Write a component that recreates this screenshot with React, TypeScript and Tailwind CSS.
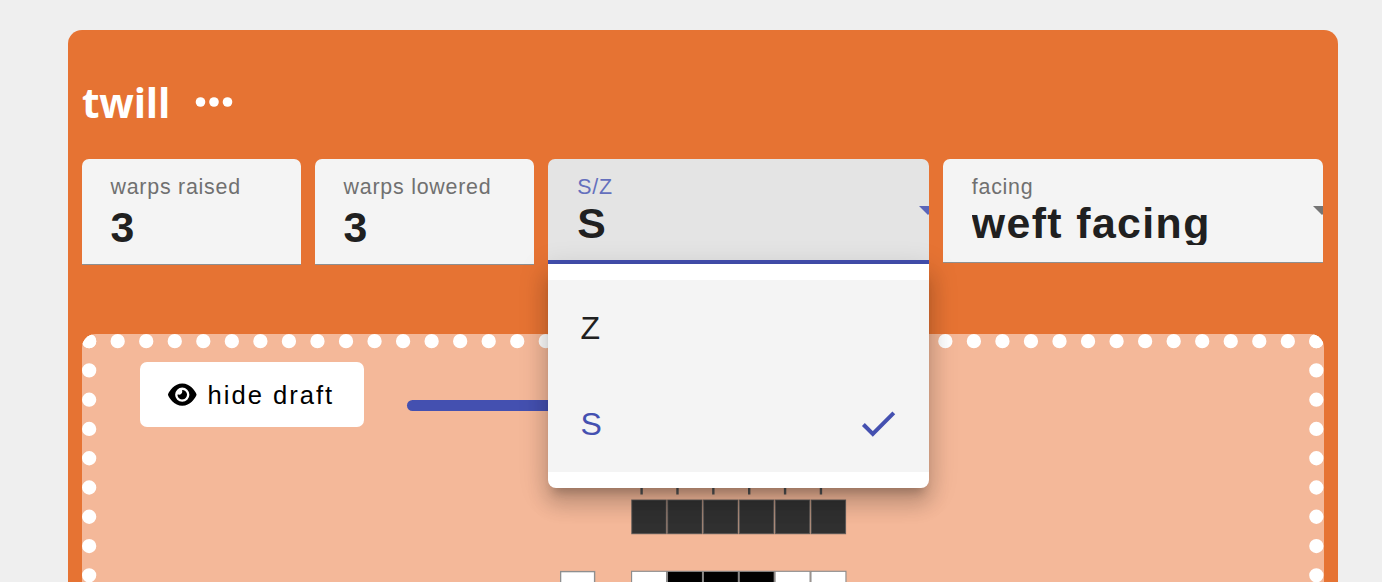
import type { ReactNode } from "react";
import { FaEye } from "react-icons/fa6";

const columns = [0, 1, 2, 3, 4, 5];
const raised = [false, true, true, true, false, false];

function Label({ children, tone = "text-[#707070]" }: { children: ReactNode; tone?: string }) {
  return (
    <div className={`h-6 whitespace-nowrap text-[21.4px] leading-6 tracking-[0.76px] ${tone}`}>{children}</div>
  );
}

function NumberField({ label, value }: { label: string; value: number }) {
  return (
    <div className="h-[106px] w-[219px] rounded-t-[7px] border-b-[1.5px] border-[#8d8f91] bg-[#f4f4f4] pl-[28.5px] pt-[16px]">
      <Label>{label}</Label>
      <div className="mt-[4px] text-[42.8px] font-bold leading-[48px] tracking-[1.4px] text-[#202020]">{value}</div>
    </div>
  );
}

function SelectField({ label, value, open = false }: { label: string; value: string; open?: boolean }) {
  return (
    <div
      className={
        open
          ? "flex h-[105.5px] w-[380.5px] overflow-hidden rounded-t-[7px] border-b-4 border-[#4450b0] bg-[#e4e4e4] pl-[29px] pt-[16px]"
          : "flex h-[104.5px] w-[380.5px] overflow-hidden rounded-t-[7px] border-b-[1.5px] border-[#8f8f8f] bg-[#f4f4f4] pl-[29px] pt-[16px]"
      }
    >
      <div className="w-[341.5px] shrink-0">
        <Label tone={open ? "text-[#6470bd]" : undefined}>{label}</Label>
        <div className="h-[46.5px] overflow-hidden whitespace-nowrap text-[42.8px] font-bold leading-[48px] tracking-[1.4px] text-[#202020]">
          {value}
        </div>
      </div>
      <svg
        className={`mt-[31px] h-[9px] w-[18px] shrink-0 ${open ? "text-[#5b66ba]" : "text-[#757575]"}`}
        viewBox="0 0 18 9"
      >
        <path d="M0 0H18L9 9Z" fill="currentColor" />
      </svg>
    </div>
  );
}

function Menu() {
  return (
    <div className="absolute -left-[0.2px] top-[105.5px] z-10 h-[224px] w-[381px] rounded-b-[8px] bg-white py-4 text-[32px] shadow-[0_10px_10px_-6px_rgba(0,0,0,0.2),0_16px_20px_2px_rgba(0,0,0,0.14),0_6px_28px_4px_rgba(0,0,0,0.12)]">
      <div className="flex h-24 items-center bg-[#f4f4f4] pl-[32.5px] text-[#202020]">Z</div>
      <div className="flex h-24 items-center justify-between bg-[#f4f4f4] pl-[32.5px] pr-[32.4px] text-[#4450b0]">
        <span>S</span>
        <svg className="h-[28px] w-[36px]" viewBox="0 0 36 28" fill="none">
          <path d="M2.4 14.5L11.8 23.9L32.8 2.9" stroke="currentColor" strokeWidth="4" />
        </svg>
      </div>
    </div>
  );
}

function DottedEdge() {
  return (
    <svg
      className="pointer-events-none absolute inset-0 h-[300px] w-[1241.5px]"
      viewBox="0 0 1241.5 300"
      fill="none"
      stroke="white"
      strokeWidth="14.3"
      strokeLinecap="round"
    >
      <path d="M7.15 7.15H1236" strokeDasharray="0 28.54" />
      <path d="M7.15 7.15V300" strokeDasharray="0 29.27" />
      <path d="M1234.35 7.15V300" strokeDasharray="0 29.27" />
    </svg>
  );
}

function Draft() {
  return (
    <svg className="ml-[478px] h-[112px] w-[290px]" viewBox="560 470 290 112">
      {columns.map((i) => (
        <g key={i} stroke="#555555">
          <path d={`M${641.6 + i * 35.87} 470V494.5`} strokeWidth="2.4" />
          <rect x={631.8 + i * 35.87} y="500" width="34.4" height="33.7" fill="#303030" strokeWidth="1.1" strokeOpacity=".8" />
          <rect
            x={631.6 + i * 35.87}
            y="571.3"
            width="35"
            height="34"
            fill={raised[i] ? "#000000" : "#ffffff"}
            stroke="#8a8a8a"
            strokeWidth="1.1"
          />
        </g>
      ))}
      <rect x="560.6" y="571.6" width="34" height="34" fill="white" stroke="#8f8f8f" strokeWidth="1.4" />
    </svg>
  );
}

export default function App() {
  return (
    <div className="h-[582px] w-[1382px] overflow-hidden bg-[#efefef] pl-[68px] pt-[29.5px] font-['Liberation_Sans',Arial,sans-serif]">
      <main className="h-[700px] w-[1270px] rounded-[14px] bg-[#e67333] px-[14px] pt-[43.5px]">
        <header className="flex h-[60px] items-center">
          <h1 className="font-['Open_Sans',sans-serif] text-[40.4px] font-bold leading-[60px] tracking-[-0.2px] text-white">twill</h1>
          <svg className="ml-[24.5px] h-[12px] w-[38px]" viewBox="0 0 38 12" fill="white">
            <circle cx="5.5" cy="5" r="4.8" />
            <circle cx="19" cy="5" r="4.8" />
            <circle cx="32.5" cy="5" r="4.8" />
          </svg>
        </header>

        <div className="mt-[25.5px] flex h-[175.5px] items-start gap-[14.1px]">
          <NumberField label="warps raised" value={3} />
          <NumberField label="warps lowered" value={3} />
          <div className="relative">
            <SelectField label="S/Z" value="S" open />
            <Menu />
          </div>
          <SelectField label="facing" value="weft facing" />
        </div>

        <section className="relative h-[400px] w-[1241.5px] overflow-hidden rounded-[14px] bg-[#f4b899]">
          <DottedEdge />
          <div className="flex h-[136px] items-start pl-[57.5px] pt-[28.2px]">
            <button className="flex h-[65px] w-[224.5px] items-center rounded-[7px] bg-white pl-[28.5px] text-[25.6px] tracking-[2px] text-black">
              <FaEye className="h-[25.4px] w-[28.5px] shrink-0" />
              <span className="ml-[11px] whitespace-nowrap pt-[2px]">hide draft</span>
            </button>
            <div className="ml-[43px] mt-[37.8px] h-[11px] w-[285px] rounded-full bg-[#4450b0]" />
          </div>
          <Draft />
        </section>
      </main>
    </div>
  );
}
